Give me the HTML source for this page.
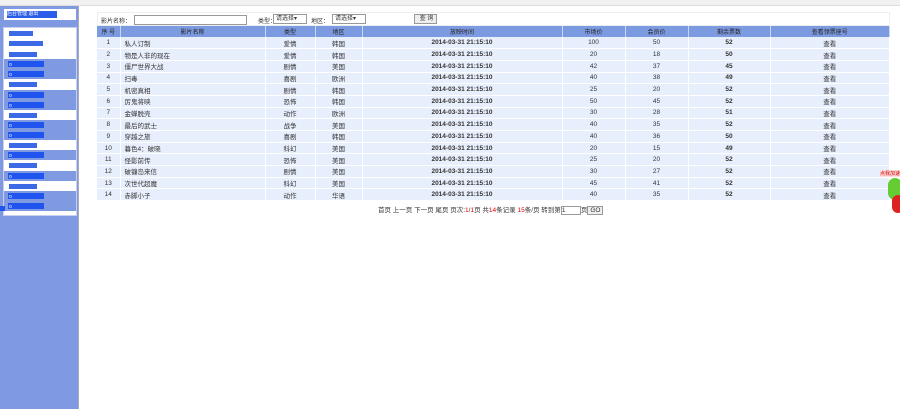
<!DOCTYPE html><html><head><meta charset="utf-8"><style>
*{margin:0;padding:0;box-sizing:border-box}
body{width:900px;height:409px;background:#fff;font-family:"Liberation Sans","Noto Sans CJK SC",sans-serif;font-size:7px;color:#333;position:relative;overflow:hidden}
.top{position:absolute;left:0;top:0;width:900px;height:6px;background:#f1f1f1;border-bottom:1px solid #ddd}
.side{position:absolute;left:0;top:6px;width:79px;height:403px;background:#7f9ae0;border-right:1px solid #aab}
.hd{position:absolute;left:4px;top:3px;width:72px;height:11px;background:#fff}
.hd span{display:inline-block;margin:2px 0 0 3px;background:#2a5ee8;color:#fff;height:7px;width:50px;font-size:5px;line-height:7px}
.panel{position:absolute;left:3px;top:21px;width:74px;height:189px;background:#fff;border:1px solid #c8d0ee}
.h{height:10.4px;padding:3px 0 0 5px}.h i{display:block;width:34px;height:5px;background:#3c6ae6}
.b{background:#7f9ae0;height:10px;padding:2px 0 0 4px;position:relative}.b i{display:block;width:36px;height:6px;background:#1f55ee}
.b i:before{content:"o";color:#fff;font-size:5px;font-style:normal;line-height:6px;padding-left:1px}
.main{position:absolute;left:97px;top:12px;width:793px}
.search{height:14px;background:#fff;border:1px solid #eee;font-size:6px;padding:3px 3px;position:relative}
.search input,.search .sel{position:absolute;border:1px solid #999;height:10px;background:#fff;font-size:6px;line-height:8px;padding-left:2px}
table{border-collapse:collapse;width:793px;background:#e8effc}
th{background:#7c9ae0;color:#222;font-weight:normal;height:11px;font-size:6px;border-right:1px solid #c9d6f2}
td{height:11.7px;border-right:1px solid #fff;border-bottom:1px solid #fff;font-size:6.5px;text-align:center;vertical-align:middle}
td.l{text-align:left;padding-left:4px}
td.b2{font-weight:bold}
.pg{position:absolute;left:378px;top:204px;font-size:6.5px}
.pg b{color:#d00;font-weight:normal}
</style></head><body>
<div class="top"></div>
<div class="side"><div class="hd"><span>后台管理 退出</span></div>
<div class="panel">
<div class="h"><i style="width:24px"></i></div><div class="h"><i></i></div><div class="h"><i style="width:28px"></i></div>
<div class="b"><i></i></div><div class="b"><i></i></div>
<div class="h"><i style="width:28px"></i></div>
<div class="b"><i></i></div><div class="b"><i></i></div>
<div class="h"><i style="width:28px"></i></div>
<div class="b"><i></i></div><div class="b"><i></i></div>
<div class="h"><i style="width:28px"></i></div>
<div class="b"><i></i></div>
<div class="h"><i style="width:28px"></i></div>
<div class="b"><i></i></div>
<div class="h"><i style="width:28px"></i></div>
<div class="b"><i></i></div><div class="b"><i></i></div>
</div>
<div style="position:absolute;left:0;width:5px;height:5px;background:#1f55ee;top:200px"></div>
</div>
<div class="main">
<div class="search">影片名称：<input style="left:36px;top:2px;width:113px"><span style="position:absolute;left:160px;top:3px">类型：</span><span class="sel" style="left:175px;top:1px;width:34px">请选择▾</span><span style="position:absolute;left:213px;top:3px">地区：</span><span class="sel" style="left:234px;top:1px;width:34px">请选择▾</span><span class="sel" style="left:316px;top:1px;width:23px;background:#eee;text-align:center">查 询</span></div>
<table>
<tr><th style="width:23px">序 号</th><th style="width:145px">影片名称</th><th style="width:50px">类型</th><th style="width:47px">地区</th><th style="width:200px">放映时间</th><th style="width:63px">市场价</th><th style="width:63px">会员价</th><th style="width:82px">剩余票数</th><th>查看领票座号</th></tr>
<tr><td>1</td><td class="l">私人订制</td><td>爱情</td><td>韩国</td><td class="b2">2014-03-31 21:15:10</td><td>100</td><td>50</td><td class="b2">52</td><td>查看</td></tr>
<tr><td>2</td><td class="l">物是人非的现在</td><td>爱情</td><td>韩国</td><td class="b2">2014-03-31 21:15:10</td><td>20</td><td>18</td><td class="b2">50</td><td>查看</td></tr>
<tr><td>3</td><td class="l">僵尸世界大战</td><td>剧情</td><td>美国</td><td class="b2">2014-03-31 21:15:10</td><td>42</td><td>37</td><td class="b2">45</td><td>查看</td></tr>
<tr><td>4</td><td class="l">扫毒</td><td>喜剧</td><td>欧洲</td><td class="b2">2014-03-31 21:15:10</td><td>40</td><td>38</td><td class="b2">49</td><td>查看</td></tr>
<tr><td>5</td><td class="l">机密真相</td><td>剧情</td><td>韩国</td><td class="b2">2014-03-31 21:15:10</td><td>25</td><td>20</td><td class="b2">52</td><td>查看</td></tr>
<tr><td>6</td><td class="l">厉鬼将映</td><td>恐怖</td><td>韩国</td><td class="b2">2014-03-31 21:15:10</td><td>50</td><td>45</td><td class="b2">52</td><td>查看</td></tr>
<tr><td>7</td><td class="l">金蝉脱壳</td><td>动作</td><td>欧洲</td><td class="b2">2014-03-31 21:15:10</td><td>30</td><td>28</td><td class="b2">51</td><td>查看</td></tr>
<tr><td>8</td><td class="l">最后的武士</td><td>战争</td><td>美国</td><td class="b2">2014-03-31 21:15:10</td><td>40</td><td>35</td><td class="b2">52</td><td>查看</td></tr>
<tr><td>9</td><td class="l">穿越之旅</td><td>喜剧</td><td>韩国</td><td class="b2">2014-03-31 21:15:10</td><td>40</td><td>36</td><td class="b2">50</td><td>查看</td></tr>
<tr><td>10</td><td class="l">暮色4：破晓</td><td>科幻</td><td>美国</td><td class="b2">2014-03-31 21:15:10</td><td>20</td><td>15</td><td class="b2">49</td><td>查看</td></tr>
<tr><td>11</td><td class="l">怪影前传</td><td>恐怖</td><td>美国</td><td class="b2">2014-03-31 21:15:10</td><td>25</td><td>20</td><td class="b2">52</td><td>查看</td></tr>
<tr><td>12</td><td class="l">破镰岛来信</td><td>剧情</td><td>美国</td><td class="b2">2014-03-31 21:15:10</td><td>30</td><td>27</td><td class="b2">52</td><td>查看</td></tr>
<tr><td>13</td><td class="l">次世代超魔</td><td>科幻</td><td>美国</td><td class="b2">2014-03-31 21:15:10</td><td>45</td><td>41</td><td class="b2">52</td><td>查看</td></tr>
<tr><td>14</td><td class="l">赤脚小子</td><td>动作</td><td>华语</td><td class="b2">2014-03-31 21:15:10</td><td>40</td><td>35</td><td class="b2">52</td><td>查看</td></tr>
</table></div>
<div class="pg">首页 上一页 下一页 尾页 页次:<b>1</b>/<b>1</b>页 共<b>14</b>条记录 <b>15</b>条/页 转到第<span style="display:inline-block;width:20px;height:9px;border:1px solid #999;vertical-align:middle">1</span>页<span style="display:inline-block;border:1px solid #999;background:#eee;padding:0 2px">GO</span></div>
<div style="position:absolute;left:880px;top:170px;width:20px;height:7px;background:#fdd;color:#c00;font-size:5px">点我加速</div>
<div style="position:absolute;left:888px;top:178px;width:14px;height:22px;background:#6c3;border-radius:7px"></div>
<div style="position:absolute;left:892px;top:195px;width:12px;height:18px;background:#d22;border-radius:6px"></div>
</body></html>
